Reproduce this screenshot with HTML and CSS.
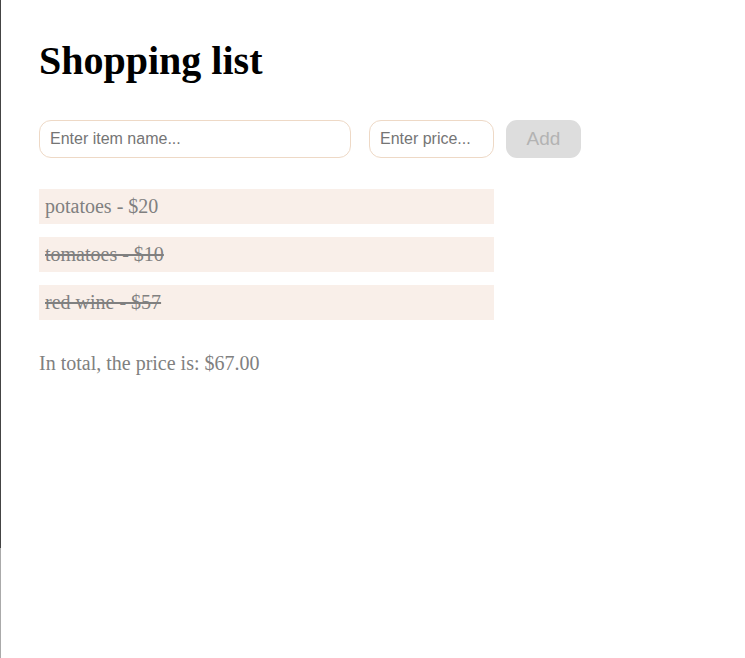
FILE: index.html
```html
<!DOCTYPE html>
<html lang="en">
<head>
<meta charset="utf-8">
<title>Shopping list</title>
<link rel="stylesheet" href="styles.css">
</head>
<body>
<main class="app">
  <h1 class="title">Shopping list</h1>
  <form class="add-form">
    <input class="field field-name" type="text" placeholder="Enter item name...">
    <input class="field field-price" type="text" placeholder="Enter price...">
    <button class="add-btn" type="button" disabled>Add</button>
  </form>
  <ul class="items">
    <li class="item">potatoes - $20</li>
    <li class="item done">tomatoes - $10</li>
    <li class="item done">red wine - $57</li>
  </ul>
  <p class="total">In total, the price is: $67.00</p>
</main>
</body>
</html>
```
FILE: styles.css
```css
html {
  background:
    linear-gradient(to bottom, #444444 0, #444444 548px, #aaaaaa 548px, #aaaaaa 100%) left top / 1px 100% no-repeat,
    #ffffff;
  min-height: 100%;
}
body {
  margin: 0;
  padding: 38px 39px 35px;
  font-family: "Liberation Serif", "Times New Roman", serif;
  color: #000;
}
.app {
  display: flex;
  flex-direction: column;
  align-items: flex-start;
}
.title {
  margin: 0;
  font-size: 40px;
  font-weight: bold;
  line-height: 46px;
}
.add-form {
  margin-top: 36px;
  display: flex;
  align-items: center;
}
.field {
  box-sizing: border-box;
  height: 38px;
  border: 1px solid #eed9c6;
  border-radius: 12px;
  padding: 0 10px;
  font-family: "Liberation Sans", Arial, sans-serif;
  font-size: 16px;
  background: #fff;
  outline: none;
}
.field::placeholder {
  color: #757575;
}
.field-name {
  width: 312px;
}
.field-price {
  width: 125px;
  margin-left: 18px;
}
.add-btn {
  box-sizing: border-box;
  width: 75px;
  height: 38px;
  margin-left: 12px;
  border: none;
  border-radius: 11px;
  background: #dddddd;
  color: #b3b3b3;
  font-family: "Liberation Sans", Arial, sans-serif;
  font-size: 19px;
  padding: 0;
}
.items {
  list-style: none;
  margin: 31px 0 0;
  padding: 0;
  display: flex;
  flex-direction: column;
  gap: 13px;
  width: 455px;
}
.item {
  background: #f9efe9;
  padding: 6px;
  font-size: 20px;
  line-height: 23px;
  color: #808080;
}
.item.done {
  text-decoration: line-through;
}
.total {
  margin: 32px 0 0;
  font-size: 20px;
  line-height: 23px;
  color: #808080;
}
```
